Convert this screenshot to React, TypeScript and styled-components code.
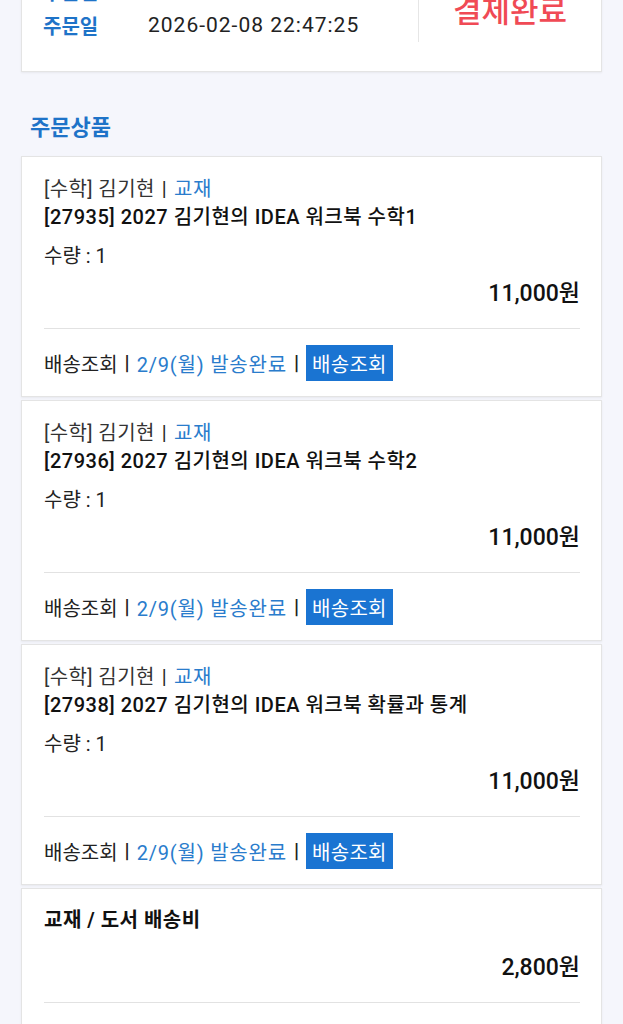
import React, { FC } from 'react';
import styled, { createGlobalStyle } from 'styled-components';

const GlobalStyle = createGlobalStyle`
  html, body {
    margin: 0;
    padding: 0;
    background: #f5f6fc;
  }
  body {
    font-family: Roboto, 'Noto Sans CJK KR', sans-serif;
    color: #222;
    -webkit-font-smoothing: antialiased;
  }
`;

const Page = styled.div`
  margin-top: -47px;
  padding: 0 21px 40px;
`;

const Card = styled.div`
  background: #fff;
  border: 1px solid #e4e4e4;
  box-shadow: 0 1px 2px rgba(0, 0, 0, 0.06);
`;

const TopCard = styled(Card)`
  display: flex;
  padding: 20px 0 29px 21px;
`;

const InfoList = styled.div`
  flex: 1;
`;

const InfoRow = styled.div`
  display: flex;
  align-items: center;
  height: 34px;
  font-size: 20px;
`;

const InfoLabel = styled.span`
  width: 105px;
  color: #1e73c8;
  font-weight: 700;
`;

const InfoValue = styled.span`
  font-size: 21px;
  letter-spacing: 1px;
  color: #222;
`;

const Status = styled.div`
  width: 182px;
  border-left: 1px solid #e6e6e6;
  display: flex;
  align-items: center;
  justify-content: center;
  font-size: 31px;
  font-weight: 500;
  color: #f04a55;
`;

const SectionTitle = styled.h2`
  margin: 41px 0 13px 9px;
  font-size: 22px;
  line-height: 30px;
  font-weight: 700;
  color: #1e73c8;
`;

const ItemList = styled.div`
  display: flex;
  flex-direction: column;
  gap: 3px;
`;

const ItemCard = styled(Card)`
  padding: 18px 21px 15px 22px;
`;

const Meta = styled.div`
  font-size: 20px;
  line-height: 28px;
  letter-spacing: 0.4px;
  color: #333;
`;

const Blue = styled.span`
  color: #2a7ccc;
`;

const LinkText = styled(Blue)`
  letter-spacing: 0.8px;
`;

const Title = styled.div<{ $bold?: boolean }>`
  font-size: 20px;
  line-height: 28px;
  letter-spacing: 0.5px;
  font-weight: ${(p) => (p.$bold ? 700 : 500)};
  color: #111;
`;

const Qty = styled.div`
  margin-top: 11px;
  font-size: 20px;
  line-height: 28px;
  color: #222;
`;

const Price = styled.div<{ $gap?: number }>`
  margin-top: ${(p) => p.$gap ?? 10}px;
  text-align: right;
  font-size: 23px;
  line-height: 28px;
  font-weight: 500;
  color: #111;
`;

const Divider = styled.hr`
  margin: 20px 0 0;
  border: 0;
  border-top: 1px solid #e2e2e2;
`;

const Footer = styled.div`
  margin-top: 16px;
  display: flex;
  align-items: center;
  height: 36px;
  font-size: 20px;
  color: #222;
`;

const Sep = styled.span<{ $inline?: boolean }>`
  margin: ${(p) => (p.$inline ? '0 7px' : '0 7px')};
  font-weight: ${(p) => (p.$inline ? 400 : 700)};
  color: #222;
`;

const TrackButton = styled.button`
  height: 36px;
  padding: 0 6px;
  border: 0;
  background: #1a74d2;
  color: #fff;
  font-family: inherit;
  font-size: 20px;
  letter-spacing: 0.3px;
  cursor: pointer;
`;

const ShipCard = styled(Card)`
  padding: 17px 21px 40px 22px;
`;

type Item = {
  code: string;
  name: string;
  qty: number;
  price: string;
};

const items: Item[] = [
  { code: '27935', name: '2027 김기현의 IDEA 워크북 수학1', qty: 1, price: '11,000원' },
  { code: '27936', name: '2027 김기현의 IDEA 워크북 수학2', qty: 1, price: '11,000원' },
  { code: '27938', name: '2027 김기현의 IDEA 워크북 확률과 통계', qty: 1, price: '11,000원' },
];

const ItemRow: FC<{ item: Item }> = ({ item }) => (
  <ItemCard>
    <Meta>
      [수학] 김기현<Sep $inline>|</Sep>
      <Blue>교재</Blue>
    </Meta>
    <Title>
      [{item.code}] {item.name}
    </Title>
    <Qty>수량 : {item.qty}</Qty>
    <Price>{item.price}</Price>
    <Divider />
    <Footer>
      배송조회<Sep>|</Sep>
      <LinkText>2/9(월) 발송완료</LinkText>
      <Sep>|</Sep>
      <TrackButton>배송조회</TrackButton>
    </Footer>
  </ItemCard>
);

const App: FC = () => (
  <>
    <GlobalStyle />
    <Page>
      <TopCard>
        <InfoList>
          <InfoRow>
            <InfoLabel>주문번호</InfoLabel>
            <InfoValue>20260208224725</InfoValue>
          </InfoRow>
          <InfoRow>
            <InfoLabel>주문일</InfoLabel>
            <InfoValue>2026-02-08 22:47:25</InfoValue>
          </InfoRow>
        </InfoList>
        <Status>결제완료</Status>
      </TopCard>

      <SectionTitle>주문상품</SectionTitle>

      <ItemList>
        {items.map((item) => (
          <ItemRow key={item.code} item={item} />
        ))}
        <ShipCard>
          <Title $bold>교재 / 도서 배송비</Title>
          <Price $gap={20}>2,800원</Price>
          <Divider />
        </ShipCard>
      </ItemList>
    </Page>
  </>
);

export default App;
